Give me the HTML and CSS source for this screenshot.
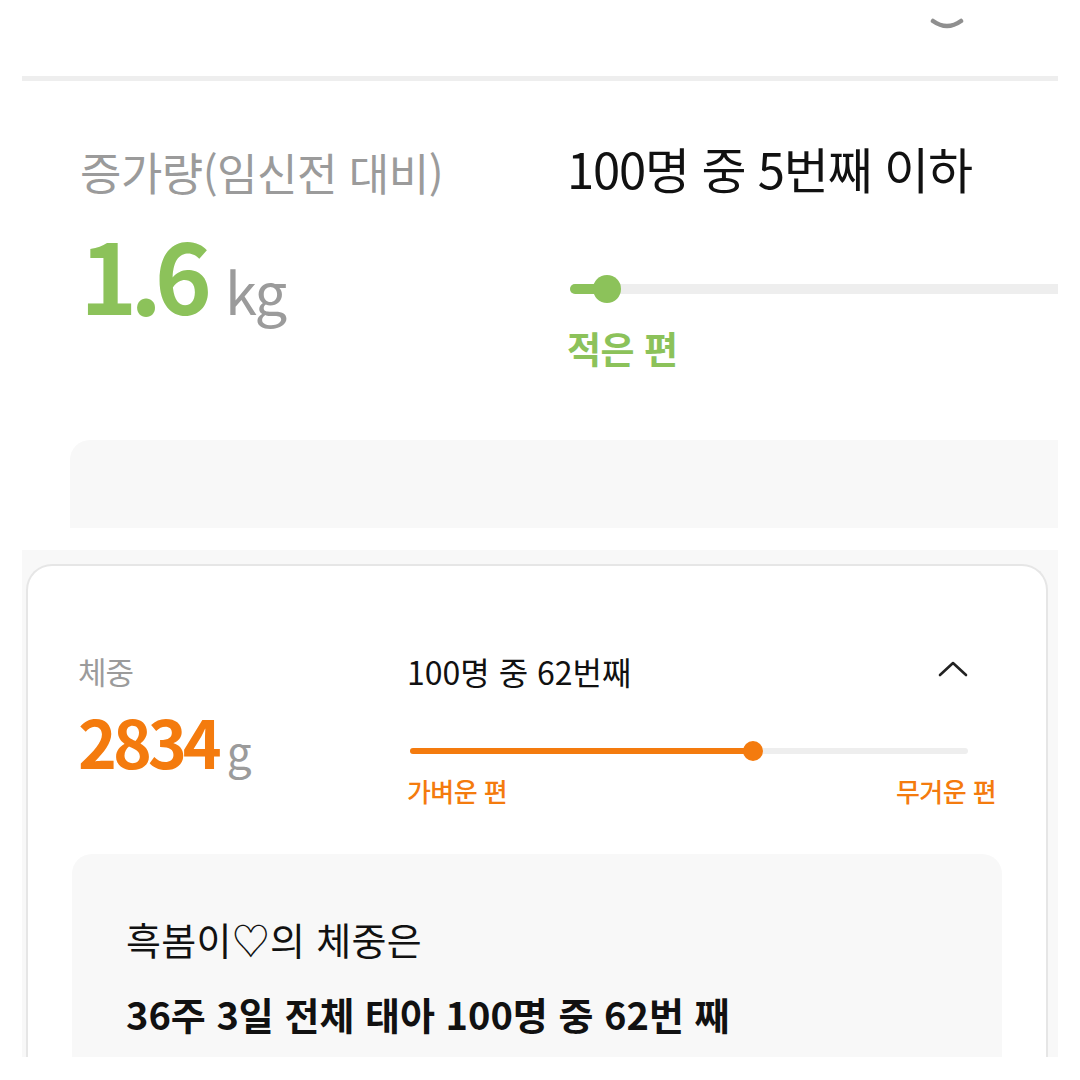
FILE: index.html
```html
<!DOCTYPE html>
<html lang="ko">
<head>
<meta charset="utf-8">
<link rel="stylesheet" href="styles.css">
</head>
<body>
<div class="screen">
  <div class="topbar">
    <svg class="top-icon" width="34" height="14" viewBox="0 0 34 14"><path d="M3 3 Q17 13 31 3" fill="none" stroke="#8f8f8f" stroke-width="4.5" stroke-linecap="round"/></svg>
  </div>
  <div class="divider"></div>

  <section class="gain">
    <div class="col-left">
      <div class="gain-label">증가량<span class="paren">(임신전 대비)</span></div>
      <div class="gain-value"><span class="num green">1.6</span><span class="unit-kg">kg</span></div>
    </div>
    <div class="col-right">
      <div class="rank-big">100명 중 5번째 이하</div>
      <div class="slider slider-green">
        <div class="track"><div class="fill" style="width:37px"></div></div>
        <div class="knob" style="left:37px"></div>
      </div>
      <div class="side-green">적은 편</div>
    </div>
  </section>
  <div class="gain-note"></div>

  <section class="weight-wrap">
    <div class="card">
      <div class="card-grid">
        <div class="w-left">
          <div class="w-label">체중</div>
          <div class="w-value"><span class="w-num">2834</span><span class="w-unit">g</span></div>
        </div>
        <div class="w-right">
          <div class="w-top">
            <div class="rank-small">100명 중 62번째</div>
            <svg class="chev" width="32" height="18" viewBox="0 0 32 18"><polyline points="3,15 16,3 29,15" fill="none" stroke="#222" stroke-width="2.6" stroke-linecap="round" stroke-linejoin="round"/></svg>
          </div>
          <div class="slider slider-orange">
            <div class="track"><div class="fill" style="width:343px"></div></div>
            <div class="knob" style="left:343px"></div>
          </div>
          <div class="ends">
            <span>가벼운 편</span>
            <span>무거운 편</span>
          </div>
        </div>
      </div>
      <div class="summary">
        <div class="sum-line1">흑봄이♡의 체중은</div>
        <div class="sum-line2">36주 3일 전체 태아 100명 중 62번 째</div>
      </div>
    </div>
  </section>
</div>
</body>
</html>
```
FILE: styles.css
```css
* { box-sizing: border-box; }
html, body { margin: 0; padding: 0; background: #ffffff; }
body { font-family: "Noto Sans CJK KR", "Noto Sans", sans-serif; color: #111; }

.screen {
  width: 1036px;
  height: 1057px;
  margin-left: 22px;
  overflow: hidden;
  background: #ffffff;
}

.topbar {
  height: 76px;
  display: flex;
  justify-content: flex-end;
  align-items: flex-start;
  padding-right: 94px;
}
.top-icon { margin-top: 18px; display: block; }

.divider { height: 5px; background: #eeeeee; }

/* gain section */
.gain {
  display: grid;
  grid-template-columns: 487px 1fr;
  padding-left: 58px;
}
.col-left { padding-top: 66px; }
.gain-label {
  font-size: 45px;
  line-height: 50px;
  color: #9b9b9b;
  letter-spacing: -0.5px;
  white-space: nowrap;
}
.gain-label .paren { font-size: 44px; letter-spacing: -0.5px; }
.gain-value {
  margin-top: 27px;
  display: flex;
  align-items: baseline;
  line-height: 1;
}
.num.green {
  font-size: 97px;
  font-weight: 700;
  color: #8cc25a;
  letter-spacing: -7px;
}
.unit-kg {
  font-size: 58px;
  color: #9b9b9b;
  margin-left: 20px;
  letter-spacing: -2px;
}

.col-right { padding-top: 60px; }
.rank-big {
  font-size: 49px;
  line-height: 54px;
  letter-spacing: -1.2px;
  white-space: nowrap;
  color: #111;
}

.slider { position: relative; }
.slider .track { position: absolute; left: 0; right: 0; overflow: hidden; background: #eeeeee; }
.slider .fill { height: 100%; }
.slider .knob { position: absolute; border-radius: 50%; }

.slider-green { height: 28px; margin-top: 80px; margin-left: 3px; }
.slider-green .track { top: 9px; height: 10px; border-radius: 5px; right: -60px; }
.slider-green .fill { background: #8cc25a; }
.slider-green .knob { top: 0; width: 28px; height: 28px; margin-left: -14px; background: #8cc25a; }

.side-green {
  margin-top: 25px;
  font-size: 37px;
  line-height: 40px;
  font-weight: 600;
  color: #8cc25a;
  letter-spacing: -0.5px;
}

.gain-note {
  margin-top: 72px;
  margin-left: 48px;
  margin-right: -40px;
  height: 88px;
  background: #f8f8f8;
  border-top-left-radius: 20px;
}

/* weight section */
.weight-wrap {
  margin-top: 22px;
  background: #f8f8f8;
  padding: 14px 10px 0 4px;
}
.card {
  background: #ffffff;
  border: 2px solid #e6e6e6;
  border-bottom: none;
  border-radius: 26px 26px 0 0;
  height: 600px;
  padding: 85px 44px 0 44px;
}
.card-grid {
  display: grid;
  grid-template-columns: 329px 1fr;
  padding-left: 6px;
  padding-right: 6px;
}
.w-label {
  font-size: 31px;
  line-height: 40px;
  color: #9b9b9b;
  letter-spacing: -1px;
}
.w-value {
  margin-top: 16px;
  display: flex;
  align-items: baseline;
  line-height: 1;
}
.w-num {
  font-size: 66px;
  font-weight: 700;
  color: #f47b0e;
  letter-spacing: -4px;
}
.w-unit {
  font-size: 44px;
  color: #9b9b9b;
  margin-left: 9px;
}

.w-top {
  display: flex;
  justify-content: space-between;
  align-items: center;
  height: 40px;
  padding-right: 27px;
}
.rank-small {
  font-size: 32px;
  line-height: 40px;
  letter-spacing: 0;
  color: #111;
}
.chev { display: block; margin-top: -4px; }

.slider-orange { height: 20px; margin-top: 50px; margin-left: 3px; margin-right: 28px; }
.slider-orange .track { top: 7px; height: 6px; border-radius: 3px; }
.slider-orange .fill { background: #f47b0e; }
.slider-orange .knob { top: 0; width: 20px; height: 20px; margin-left: -10px; background: #f47b0e; }

.ends {
  margin-top: 15px;
  display: flex;
  justify-content: space-between;
  font-size: 26px;
  line-height: 30px;
  font-weight: 500;
  color: #f47b0e;
  letter-spacing: -0.6px;
}

.summary {
  margin-top: 48px;
  background: #f8f8f8;
  border-radius: 20px;
  height: 260px;
  padding: 63px 0 0 54px;
}
.sum-line1 {
  font-size: 38px;
  line-height: 44px;
  color: #111;
  letter-spacing: 0.3px;
}
.sum-line2 {
  margin-top: 31px;
  font-size: 38px;
  line-height: 44px;
  font-weight: 700;
  color: #111;
  letter-spacing: 0;
}
```
